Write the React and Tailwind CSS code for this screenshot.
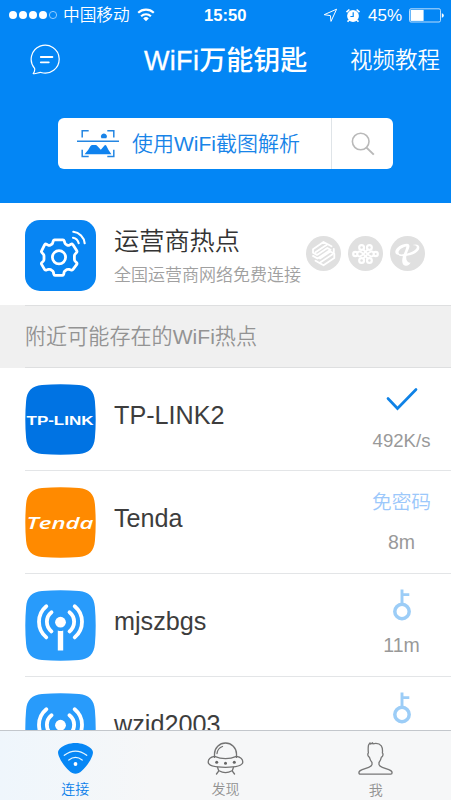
const FONT = "font-['Liberation_Sans','Noto_Sans_CJK_SC',sans-serif]";

function StatusBar() {
  return (
    <div className="flex h-[30px] items-center pl-[9px] pr-[8px] text-white">
      <svg className="h-[10px] w-[49px] shrink-0" viewBox="0 0 49 10">
        {[4, 14, 24, 34].map((x) => (
          <circle key={x} cx={x} cy="5" r="4" fill="#fff" />
        ))}
        <circle cx="44" cy="5" r="3.6" fill="none" stroke="#b5dcff" strokeWidth="0.8" />
      </svg>
      <span className="ml-[5px] w-[67px] shrink-0 whitespace-nowrap pt-px text-[16.7px] font-[350] leading-[20px]">中国移动</span>
      <svg className="ml-[7px] h-[14px] w-[18px] shrink-0" viewBox="0 0 18 14">
        <g fill="none" stroke="#fff" strokeWidth="2.1">
          <path d="M1.2 4.8a11.2 11.2 0 0 1 15.6 0" />
          <path d="M4.1 8.2a7 7 0 0 1 9.8 0" />
        </g>
        <path d="M6.2 10.4a4.1 4.1 0 0 1 5.6 0L9 13.3z" fill="#fff" />
      </svg>
      <span className="ml-[49px] w-[44px] shrink-0 pt-px text-[16.6px] font-bold leading-[20px]">15:50</span>
      <svg className="ml-[75px] h-[15px] w-[15px] shrink-0" viewBox="0 0 15 15" fill="none" stroke="#fff" strokeWidth="1">
        <path d="M13.6 1.2 1.2 6.7l6.2.9.6 5.8z" />
      </svg>
      <svg className="ml-[7px] h-[15px] w-[16px] shrink-0" viewBox="0 0 16 15">
        <circle cx="8" cy="8" r="5.9" fill="#fff" />
        <path d="M1.5 4.2 4.4 1.5M14.5 4.2l-2.9-2.7M3.8 12.3l-1.2 1.4M12.2 12.3l1.2 1.4" stroke="#fff" strokeWidth="1.7" />
        <path d="M8.2 4.3v4.2H5.4" stroke="#0386f5" strokeWidth="1.2" fill="none" />
      </svg>
      <span className="ml-[7px] w-[36px] shrink-0 pt-px text-[17px] leading-[20px]">45%</span>
      <svg className="ml-[5px] h-[15px] w-[36px] shrink-0" viewBox="0 0 36 15">
        <rect x="0.5" y="0.8" width="31" height="13.2" rx="1.5" fill="none" stroke="#cfe7fd" strokeWidth="0.9" />
        <rect x="1.6" y="1.9" width="13" height="11" fill="#fff" />
        <path d="M32.8 5.2q2 .4 2 2.3t-2 2.3z" fill="#fff" />
      </svg>
    </div>
  );
}

function ChatIcon() {
  return (
    <svg className="h-[32px] w-[32px]" viewBox="0 0 32 32" fill="none" stroke="#fff" strokeLinecap="round" strokeLinejoin="round">
      <path d="M4.6 24.3A14 14 0 1 1 11 28.5C8.8 27.9 6.1 30.4 3.2 29.6 4.3 28.3 5 26.5 4.6 24.3z" strokeWidth="1.2" />
      <path d="M10.8 13h11.6M10.8 18.3h8" strokeWidth="1.8" />
    </svg>
  );
}

function ScanIcon() {
  return (
    <svg className="h-[30px] w-[42px]" viewBox="0 0 42 30">
      <g fill="none" stroke="#2486e2" strokeWidth="1.5">
        <path d="M5.2 8.5V1.8h6.5M30.3 1.8h6.5v6.7M5.2 20.8v6.7h6.5M30.3 27.5h6.5v-6.7" />
        <path d="M0 12.3h42" strokeWidth="1.6" />
      </g>
      <path d="M24.4 9.2a3 3 0 1 1 5 0z" fill="#1a84e8" />
      <path d="M7.6 25.2q4.2-4.5 5.9-8.2.7-1 1.9-1h3.2q1 0 1.7.9l3.5 3.8 3.9-4.4q.8-.8 1.5.3 2.2 5 5.2 8.6z" fill="#0f82ee" />
    </svg>
  );
}

function Header() {
  return (
    <header className="h-[203px] shrink-0 bg-[#0386f5] text-white">
      <StatusBar />
      <div className="flex h-[60px] items-center pl-[30px]">
        <ChatIcon />
        <h1 className="ml-[82px] w-[165px] whitespace-nowrap pt-[2px] text-[27px] font-medium leading-[32px]"><span className="tracking-[0.3px] [-webkit-text-stroke:0.3px_white]">WiFi</span>万能钥匙</h1>
        <span className="ml-[41px] whitespace-nowrap pt-[2px] text-[22.5px] font-[350] leading-[30px]">视频教程</span>
      </div>
      <div className="ml-[58px] mt-[28px] flex h-[51px] w-[335px] rounded-[6px] bg-white">
        <div className="flex w-[274px] items-center border-r border-[#dfe4e8] pl-[19px]">
          <ScanIcon />
          <span className="ml-[13px] whitespace-nowrap text-[21px] font-[350] leading-[30px] text-[#1884e8]">使用WiFi截图解析</span>
        </div>
        <div className="flex flex-1 items-center justify-center">
          <svg className="h-[24px] w-[24px]" viewBox="0 0 24 24" fill="none" stroke="#b9b9b9" strokeWidth="1.6">
            <circle cx="9.7" cy="9.5" r="8.3" />
            <path d="m15.5 15.6 7.3 7" strokeWidth="2" />
          </svg>
        </div>
      </div>
    </header>
  );
}

function GearIcon() {
  return (
    <svg className="h-[71px] w-[71px] rounded-[15px] bg-[#0785f3]" viewBox="0 0 71 71" fill="none" stroke="#fff" strokeLinecap="round" strokeLinejoin="round">
      <path strokeWidth="2.8" d="M30 19.8h8q.9 0 1.2 1l.7 2.3q.3 1 1.3 1.5l1.2.6q1 .5 2-.1l1.6-.9q1-.5 1.8.4l4 6.2q.5 1-.3 1.8l-1.4 1.5q-.7.8-.7 1.9v3.2q0 1.1.7 1.9l1.4 1.5q.8.8.3 1.8l-4 5.2q-.8.9-1.8.4l-2-.6q-1-.3-2 .2l-1.5.8q-1 .5-1.3 1.5l-.5 2.2q-.3 1.2-1.2 1.2H30q-.9 0-1.2-1.2l-.5-2.2q-.3-1-1.3-1.5l-1.5-.8q-1-.5-2-.2l-2 .6q-1 .5-1.8-.4l-3.1-5.2q-.5-1 .3-1.8l1.4-1.5q.7-.8.7-1.9v-3.2q0-1.1-.7-1.9l-1.4-1.5q-.8-.8-.3-1.8l3.1-6.2q.8-.9 1.8-.4l1.6.9q1 .6 2 .1l1.2-.6q1-.5 1.3-1.5l.7-2.3q.3-1 1.2-1z" />
      <circle cx="34" cy="37.3" r="6.6" strokeWidth="2.8" />
      <path strokeWidth="2.1" d="M48 17.8a7.3 7.3 0 0 1 5.7 5.5M48.3 11.8a13 13 0 0 1 11.4 11.5" />
    </svg>
  );
}

function Carriers() {
  return (
    <div className="flex gap-[7px]">
      <svg className="h-[35px] w-[35px]" viewBox="0 0 35 35">
        <circle cx="17.5" cy="17.5" r="17.5" fill="#e0e0e0" />
        <g fill="none" stroke="#fff" strokeWidth="1.8" strokeLinejoin="round" strokeLinecap="round">
          <path d="M25.5 10.3 17.5 6 7 13.2v3.5l4 2.2 10.3-7 3.2 1.9-13 8.7L7 19.9" />
          <path d="M20.8 8.8 9.5 16.2M9.5 24.7 17.5 29.3 28.3 22v-4.3l-4-2.2-10.3 7M14.5 26.3 26.2 18.6M27.8 12.8v4" />
        </g>
      </svg>
      <svg className="h-[35px] w-[35px]" viewBox="0 0 35 35">
        <circle cx="17.5" cy="17.5" r="17.5" fill="#e0e0e0" />
        <g fill="none" stroke="#fff" strokeWidth="2.2">
          <circle cx="13.6" cy="11.5" r="2.4" />
          <circle cx="21.4" cy="11.5" r="2.4" />
          <circle cx="13.6" cy="24.5" r="2.4" />
          <circle cx="21.4" cy="24.5" r="2.4" />
          <circle cx="7.3" cy="18" r="2.1" />
          <circle cx="27.7" cy="18" r="2.1" />
          <path d="m15.2 13.5 6.4 6.3q2.4 1.5 4-.4M19.8 13.5l-6.4 6.3q-2.4 1.5-4-.4M15.2 22.5l6.4-6.3q2.4-1.5 4 .4M19.8 22.5l-6.4-6.3q-2.4-1.5-4 .4" strokeWidth="1.8" />
        </g>
      </svg>
      <svg className="h-[35px] w-[35px]" viewBox="0 0 35 35">
        <circle cx="17.5" cy="17.5" r="17.5" fill="#e0e0e0" />
        <path d="M17 7.8c3.4.5 2.700 3.400 1.300 6.300-1.900 4.200-3.100 8.600-1 11.200.9 1.300 2.100 1.600 3.200 1.200-.5 2-2.500 3.500-4.800 3.300-3.800-.5-4.200-5-2.700-9.600 1-3.700 3.200-7.200 3.400-9.800-3.800.8-7.300 3-7.800 5.400-.3 1.700 1 2.600 2.800 2.900-3.800.7-6.400-.6-6.100-3.100C5.700 11.800 11.500 8 17 7.800z" fill="#fff" />
        <path d="M8.200 18.500C16.200 18.600 24.500 15.700 26.500 12.200c1.100-2-.6-3-4.200-3.100 4.400-1.400 7.300-.1 7 2.800-.4 4.600-9.600 9.100-19.400 8.100z" fill="#fff" />
      </svg>
    </div>
  );
}

const TILE = 'M17 1.1Q35.5-.5 54 1.1C64 1.9 69.1 7 69.9 17Q71.5 35.5 69.9 54C69.1 64 64 69.1 54 69.9Q35.5 71.5 17 69.9C7 69.1 1.9 64 1.1 54Q-.5 35.5 1.1 17C1.9 7 7 1.9 17 1.1z';

function BrandTile({ kind }) {
  if (kind === 'tplink') {
    return (
      <svg className="h-[71px] w-[71px]" viewBox="0 0 71 71">
        <path d={TILE} fill="#0073e3" />
        <text x="1.5" y="41.4" textLength="67" lengthAdjust="spacingAndGlyphs" fill="#fff" fontFamily="Liberation Sans" fontSize="13.4" fontWeight="700">TP-LINK</text>
      </svg>
    );
  }
  if (kind === 'tenda') {
    return (
      <svg className="h-[71px] w-[71px]" viewBox="0 0 71 71">
        <path d={TILE} fill="#ff8a00" />
        <text x="1.5" y="41.6" textLength="67" lengthAdjust="spacingAndGlyphs" fill="#fff" fontFamily="Open Sans" fontSize="17" fontWeight="600" fontStyle="italic">Tenda</text>
      </svg>
    );
  }
  return (
    <svg className="h-[71px] w-[71px]" viewBox="0 0 71 71">
      <path d={TILE} fill="#289bfb" />
      <g fill="none" stroke="#fff" strokeLinecap="round" strokeWidth="3.8">
        <path d="M21.3 16.2a20.3 20.3 0 0 0 0 31.2M49.7 16.2a20.3 20.3 0 0 1 0 31.2M26.5 22.2a12.3 12.3 0 0 0 0 19.2M44.5 22.2a12.3 12.3 0 0 1 0 19.2" />
      </g>
      <circle cx="35.5" cy="32.2" r="5.4" fill="#fff" />
      <path d="M32.8 40.5q2.7 1 5.4 0V60.5h-5.4z" fill="#fff" />
    </svg>
  );
}

function KeyIcon() {
  return (
    <svg className="h-[32px] w-[20px]" viewBox="0 0 20 32" fill="none" stroke="#9ccdf7">
      <circle cx="10" cy="22.5" r="7.2" strokeWidth="3.5" />
      <path d="M10 15.500V.5M10 5.600h7.300" strokeWidth="2.900" />
    </svg>
  );
}

function HotspotRow({ kind, name, distance, children }) {
  return (
    <li className="flex h-[103px] shrink-0 pl-[25px]">
      <div className="flex flex-1 border-b border-[#e3e5e7]">
        <div className="pt-[16px]"><BrandTile kind={kind} /></div>
        <span className="ml-[18px] flex-1 pt-[32px] text-[25.2px] leading-[30px] text-[#3d3d3d]">{name}</span>
        <div className="flex w-[99px] flex-col items-center">
          <div className="flex h-[60px] items-center justify-center pt-[2px]">{children}</div>
          {distance}
        </div>
      </div>
    </li>
  );
}

function TabBar() {
  return (
    <nav className="grid h-[70px] shrink-0 grid-cols-3 border-t border-[#c3c7cc] bg-[#f6f7f8] text-[14px] font-[350] leading-[20px] text-[#929292]">
      <div className="flex flex-col items-center bg-linear-to-r from-[#eff6fc] to-[#f6f7f8] pt-[11px] text-[#0b7fea]">
        <svg className="h-[33px] w-[37px]" viewBox="0 0 37 33">
          <path d="M18.5 1c6.2 0 11.8 2.2 15.5 5.4 2.2 1.9 2.5 4.5 1.2 7.5-2.2 5.6-6 11-10.6 15.2-3.8 3.7-8.4 3.7-12.2 0C7.8 24.9 4 19.5 1.8 13.9.5 10.9.8 8.3 3 6.4 6.7 3.2 12.3 1 18.5 1z" fill="#0787f5" />
          <g fill="none" stroke="#e6f6ff" strokeWidth="1.3" strokeLinecap="round">
            <path d="M7.3 13.3q11.2-8.4 22.4 0M11.8 18q6.7-5.2 13.4 0" />
          </g>
          <circle cx="18.5" cy="22" r="1.9" fill="#fff" />
        </svg>
        <span className="mt-[4px]">连接</span>
      </div>
      <div className="flex flex-col items-center pt-[11px]">
        <svg className="h-[33px] w-[37px]" viewBox="0 0 37 33" fill="none" stroke="#737373" strokeWidth="1.3" strokeLinecap="round">
          <path d="M7.5 15.4V12a11 11 0 0 1 22 0v3.4" />
          <path d="M7.5 14.3C3.5 15 1.2 17.2 1.2 20c0 3.3 6.8 5.3 17.3 5.3S35.8 23.3 35.8 20c0-2.8-2.3-5-6.3-5.7" />
          <path d="M7.5 14.3q11 4.8 22 0M10 11.5q.8-5.6 5.5-7" />
          <path d="m10.5 25.3 1.3 3.7-2.3 3M26.5 25.3l-1.3 3.7 2.3 3M12 28.8q6.5 3.6 13 0" />
          <g fill="#666" stroke="none"><circle cx="9.7" cy="20.2" r="1.5" /><circle cx="18.5" cy="21.3" r="1.5" /><circle cx="27.3" cy="20.2" r="1.5" /></g>
        </svg>
        <span className="mt-[4px]">发现</span>
      </div>
      <div className="flex flex-col items-center pt-[11px]">
        <svg className="h-[33px] w-[37px]" viewBox="0 0 37 33" fill="none" stroke="#777" strokeWidth="1.3" strokeLinejoin="round">
          <path d="M11.5 3.2 13 .9l.8 1.2L15.5.8l.3 1c3.5-.7 7 0 8.500 2 1.200 1.700 1.400 4.300 1.100 7.200q1.100.9.2 2.900-.4 1-1.200 1.300-.6 3-2.400 5.300v2.200q.3 1.500 3.300 2.600l6.500 2.400q3.300 1.200 3.300 3.100 0 1.400-1.300 1.400H3.200q-1.300 0-1.300-1.400 0-1.900 3.300-3.100l6.500-2.400q3-1.100 3.300-2.600v-2.200q-2-2.300-2.600-5.300-.8-.3-1.200-1.300-.9-2 .2-2.900-.5-4.500.1-7.800z" />
        </svg>
        <span className="mt-[5px]">我</span>
      </div>
    </nav>
  );
}

export default function App() {
  return (
    <div className={`flex h-[800px] w-[451px] flex-col overflow-hidden bg-white ${FONT}`}>
      <Header />
      <section className="flex h-[102px] shrink-0 pl-[25px] pt-[17px]">
        <GearIcon />
        <div className="ml-[18px] w-[192px] whitespace-nowrap">
          <h2 className="mt-[4px] text-[25.2px] font-[350] leading-[34px] text-[#333]">运营商热点</h2>
          <p className="mt-[6px] text-[17px] font-[350] leading-[24px] text-[#a0a0a0]">全国运营商网络免费连接</p>
        </div>
        <div className="mt-[16px]"><Carriers /></div>
      </section>
      <div className="h-[63px] shrink-0 bg-[#f0f0f0]">
        <div className="ml-[25px] flex h-full items-center border-y border-[#dedfe0] text-[21.1px] font-[350] text-[#939393]">附近可能存在的WiFi热点</div>
      </div>
      <ul className="flex min-h-0 flex-1 flex-col overflow-hidden">
        <HotspotRow kind="tplink" name="TP-LINK2" distance={<span className="pt-[2px] text-[18.6px] leading-[22px] text-[#999]">492K/s</span>}>
          <svg className="h-[24px] w-[32px]" viewBox="0 0 32 24" fill="none" stroke="#0f82e6" strokeWidth="2.7" strokeLinecap="round">
            <path d="m2 11.5 9.5 10L30 2.5" />
          </svg>
        </HotspotRow>
        <HotspotRow kind="tenda" name="Tenda" distance={<span className="text-[19.5px] leading-[22px] text-[#999]">8m</span>}>
          <span className="text-[19.7px] font-[350] leading-[28px] text-[#9cc8fb]">免密码</span>
        </HotspotRow>
        <HotspotRow kind="wifi" name="mjszbgs" distance={<span className="text-[19.5px] leading-[22px] text-[#999]">11m</span>}>
          <KeyIcon />
        </HotspotRow>
        <HotspotRow kind="wifi" name="wzid2003" distance={null}>
          <KeyIcon />
        </HotspotRow>
      </ul>
      <TabBar />
    </div>
  );
}
